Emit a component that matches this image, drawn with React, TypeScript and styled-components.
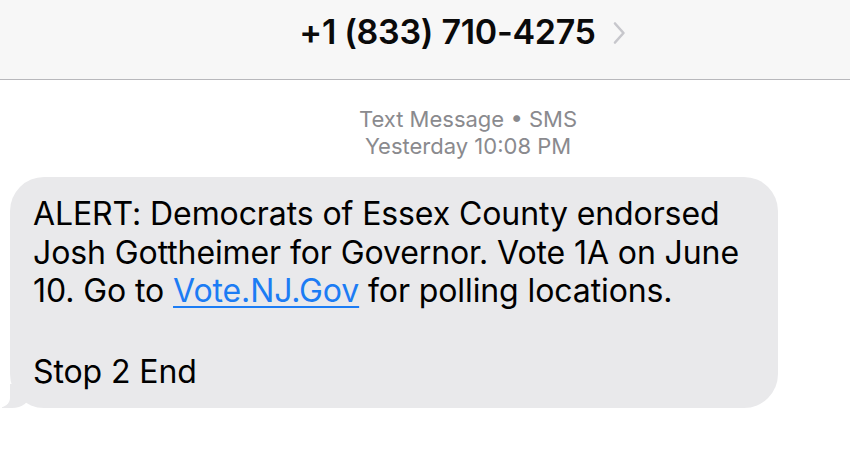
import React from "react";
import styled, { createGlobalStyle } from "styled-components";

const Global = createGlobalStyle`
	html, body {
		margin: 0;
		padding: 0;
		background: #ffffff;
	}
	body {
		font-family: "Inter", "Liberation Sans", sans-serif;
		-webkit-font-smoothing: antialiased;
	}
`;

const Screen = styled.div`
	width: 850px;
	height: 460px;
	display: flex;
	flex-direction: column;
	overflow: hidden;
	background: #ffffff;
`;

const Header = styled.header`
	height: 80px;
	box-sizing: border-box;
	background: #f7f7f7;
	border-bottom: 1px solid #b8b8bc;
	display: flex;
	justify-content: center;
	padding-top: 12px;
	padding-left: 75px;
	gap: 16px;
`;

const Contact = styled.div`
	font-size: 34px;
	font-weight: 600;
	color: #0a0a0a;
	letter-spacing: -0.3px;
	line-height: 40px;
`;

const Chevron = styled.svg`
	width: 14px;
	height: 24px;
	margin-top: 9px;
`;

const Thread = styled.main`
	display: flex;
	flex-direction: column;
	padding-top: 26px;
`;

const Meta = styled.div`
	align-self: center;
	margin-left: 86px;
	text-align: center;
	color: #8a8a8e;
	font-size: 22px;
	line-height: 27px;
`;

const Bubble = styled.div`
	position: relative;
	margin: 17px 0 0 10px;
	width: 768px;
	box-sizing: border-box;
	padding: 18px 20px 17px 23px;
	background: #e9e9eb;
	border-radius: 34px;
	color: #000000;
	font-size: 32px;
	line-height: 38.5px;
	letter-spacing: -0.1px;

	&::before {
		content: "";
		position: absolute;
		left: -8px;
		bottom: 0;
		width: 28px;
		height: 24px;
		background: #e9e9eb;
		border-bottom-right-radius: 18px 14px;
	}

	&::after {
		content: "";
		position: absolute;
		left: -18px;
		bottom: 0;
		width: 18px;
		height: 26px;
		background: #ffffff;
		border-bottom-right-radius: 12px 10px;
	}
`;

const Line = styled.p`
	position: relative;
	z-index: 1;
	margin: 0;
	white-space: pre;
`;

const Gap = styled.div`
	height: 42px;
`;

const Link = styled.a`
	color: #1c7cf4;
	text-decoration: underline;
	text-underline-offset: 4px;
	text-decoration-thickness: 1.5px;
`;

export default function App() {
	return (
		<Screen>
			<Global />
			<Header>
				<Contact>+1 (833) 710-4275</Contact>
				<Chevron viewBox="0 0 14 24">
					<path d="M3 2.5 L11.5 12 L3 21.5" fill="none" stroke="#c7c7cc" strokeWidth="2.6" strokeLinecap="round" strokeLinejoin="round" />
				</Chevron>
			</Header>
			<Thread>
				<Meta>
					Text Message • SMS
					<br />
					Yesterday 10:08 PM
				</Meta>
				<Bubble>
					<Line>ALERT: Democrats of Essex County endorsed</Line>
					<Line>Josh Gottheimer for Governor. Vote 1A on June</Line>
					<Line>
						10. Go to <Link href="#">Vote.NJ.Gov</Link> for polling locations.
					</Line>
					<Gap />
					<Line>Stop 2 End</Line>
				</Bubble>
			</Thread>
		</Screen>
	);
}
